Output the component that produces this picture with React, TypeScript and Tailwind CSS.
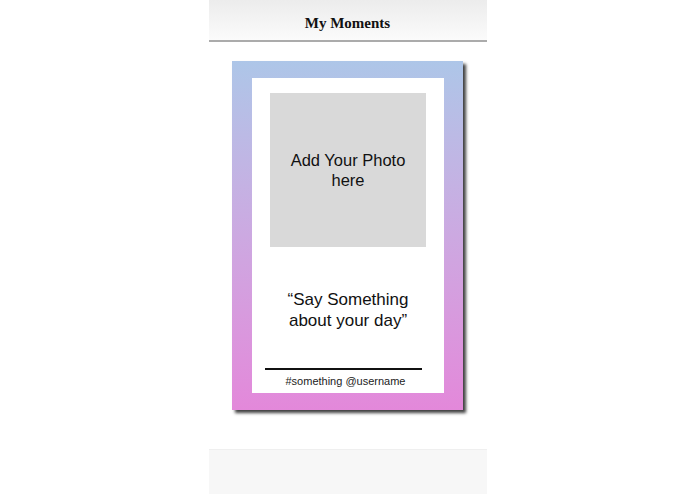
const sans = { fontFamily: '"Liberation Sans", Arial, sans-serif' };

export default function App() {
  return (
    <div className="w-full h-[494px] bg-white flex justify-center">
      <div className="w-[278px] h-full flex flex-col bg-white">
        {/* Header */}
        <div className="h-[42px] shrink-0 flex items-center justify-center bg-gradient-to-b from-[#ececec] to-[#fbfbfb] border-b-2 border-[#ababab]">
          <h1
            className="text-[15px] font-bold text-[#111] pt-[6px]"
            style={{ fontFamily: '"Liberation Serif", "Times New Roman", serif' }}
          >
            My Moments
          </h1>
        </div>

        {/* Moment card */}
        <div className="flex-1 flex justify-center pt-[19px]">
          <div className="w-[231px] h-[349px] pt-[17px] pl-[20px] pr-[19px] pb-[17px] bg-gradient-to-b from-[#adc6e8] to-[#e388da] shadow-[3px_3px_3px_rgba(0,0,0,0.75)]">
            <div className="h-full w-full bg-white flex flex-col items-center pt-[15px]" style={sans}>
              <div className="w-[156px] h-[154px] bg-[#d9d9d9] flex items-center justify-center text-center text-[16.5px] leading-[20px] text-[#111]">
                Add Your Photo<br />here
              </div>
              <p className="mt-[42px] text-center text-[17px] leading-[21px] text-[#111]">
                “Say Something<br />about your day”
              </p>
              <div className="mt-[37px] mr-[9px] w-[157px] h-[2px] bg-[#111]" />
              <p className="mt-[4px] mr-[5px] text-[11px] leading-[14px] text-[#222]">#something @username</p>
            </div>
          </div>
        </div>

        {/* Footer */}
        <div className="h-[45px] shrink-0 bg-[#f7f7f7] border-t border-[#efefef]" />
      </div>
    </div>
  );
}
